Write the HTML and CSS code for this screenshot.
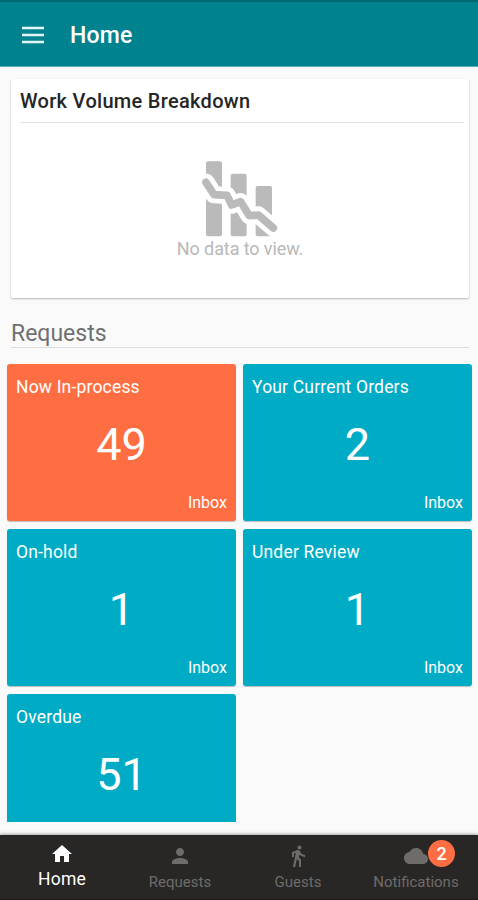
FILE: index.html
```html
<!DOCTYPE html>
<html lang="en">
  <head>
    <meta charset="UTF-8" />
    <meta name="viewport" content="width=device-width, initial-scale=1.0" />
    <title>Home</title>
    <link rel="stylesheet" href="styles.css">
  </head>
  <body>
    <header class="topbar">
      <svg class="menu-icon" viewBox="0 0 24 18" aria-label="Menu">
        <path d="M1 2h22M1 9h22M1 16h22" />
      </svg>
      <h1>Home</h1>
    </header>

    <main class="content">
      <section class="card">
        <h2>Work Volume Breakdown</h2>
        <div class="empty">
          <svg class="chart-icon" viewBox="0 0 240 240">
            <rect x="18" y="7" width="48" height="225" rx="6" />
            <rect x="92" y="44" width="48" height="188" rx="6" />
            <rect x="167" y="81" width="49" height="151" rx="6" />
            <path class="gap" d="M18 70L42 107L81 109L95 138L122 128L148 170L175 168L222 208" />
            <path class="trend" d="M18 70L42 107L81 109L95 138L122 128L148 170L175 168L220 207" />
          </svg>
          <p>No data to view.</p>
        </div>
      </section>

      <h2 class="section-title">Requests</h2>

      <div class="tiles">
        <div class="tile active">
          <span class="name">Now In-process</span>
          <span class="count">49</span>
          <span class="box">Inbox</span>
        </div>
        <div class="tile">
          <span class="name">Your Current Orders</span>
          <span class="count">2</span>
          <span class="box">Inbox</span>
        </div>
        <div class="tile">
          <span class="name">On-hold</span>
          <span class="count">1</span>
          <span class="box">Inbox</span>
        </div>
        <div class="tile">
          <span class="name">Under Review</span>
          <span class="count">1</span>
          <span class="box">Inbox</span>
        </div>
        <div class="tile">
          <span class="name">Overdue</span>
          <span class="count">51</span>
        </div>
      </div>
    </main>

    <nav class="tabs">
      <a class="tab selected">
        <svg viewBox="0 0 24 24"><path d="M10 20v-6h4v6h5v-8h3L12 3 2 12h3v8z" /></svg>
        <span>Home</span>
      </a>
      <a class="tab">
        <svg viewBox="0 0 24 24"><path d="M12 12c2.210 0 4-1.790 4-4s-1.790-4-4-4-4 1.790-4 4 1.790 4 4 4zm0 2c-2.670 0-8 1.340-8 4v2h16v-2c0-2.660-5.330-4-8-4z" /></svg>
        <span>Requests</span>
      </a>
      <a class="tab">
        <svg viewBox="0 0 24 24"><path d="M13.500 5.500c1.100 0 2-.9 2-2s-.9-2-2-2-2 .9-2 2 .9 2 2 2zM9.800 8.900L7 23h2.100l1.800-8 2.100 2v6h2v-7.500l-2.100-2 .6-3C14.800 12 16.800 13 19 13v-2c-1.900 0-3.500-1-4.300-2.400l-1-1.600c-.4-.6-1-1-1.700-1-.3 0-.5.1-.8.1L6 8.300V13h2V9.600l1.800-.7" /></svg>
        <span>Guests</span>
      </a>
      <a class="tab">
        <svg viewBox="0 0 24 24"><path d="M19.350 10.040C18.670 6.590 15.640 4 12 4 9.110 4 6.600 5.640 5.350 8.040 2.340 8.360 0 10.910 0 14c0 3.310 2.690 6 6 6h13c2.760 0 5-2.240 5-5 0-2.640-2.050-4.780-4.650-4.960z" /></svg>
        <span>Notifications</span>
        <b class="badge">2</b>
      </a>
    </nav>
  </body>
</html>
```

FILE: styles.css
```css
* {
  box-sizing: border-box;
}
body {
  margin: 0;
  height: 900px;
  display: flex;
  flex-direction: column;
  overflow: hidden;
  background-color: #fafafa;
  font-family: Roboto, sans-serif;
}
h1,
h2,
p {
  margin: 0;
}
.topbar {
  height: 67px;
  flex: none;
  display: flex;
  align-items: center;
  padding: 3px 21px 0;
  background-color: #00838f;
  border-top: 2px solid #006a73;
  border-bottom: 1px solid #5aabb2;
  color: #fff;
}
.menu-icon {
  width: 24px;
  height: 18px;
  margin: 0 25px 2px 0;
  fill: none;
  stroke: #e4f5f6;
  stroke-width: 2.4;
}
.topbar h1 {
  font-size: 23px;
  font-weight: 500;
  line-height: 28px;
  letter-spacing: 0.2px;
}
.content {
  height: 755px;
  flex: none;
  overflow: hidden;
  padding: 12px 6px 0 7px;
}
.card {
  height: 219px;
  margin: 0 3px 0 4px;
  padding: 0 5px 0 9px;
  background-color: #fff;
  border-radius: 2px;
  box-shadow: 0 1px 2px rgba(0, 0, 0, 0.28);
}
.card h2 {
  height: 44px;
  border-bottom: 1px solid #e2e2e2;
  font-size: 20px;
  font-weight: 500;
  line-height: 44px;
  letter-spacing: 0.3px;
  color: #262626;
}
.empty {
  display: flex;
  flex-direction: column;
  align-items: center;
  padding: 36px 4px 0 0;
  color: #b8b8b8;
}
.empty p {
  font-size: 18px;
  line-height: 20px;
  letter-spacing: -0.1px;
}
.chart-icon {
  width: 80px;
  height: 80px;
  fill: #bababa;
}
.chart-icon path {
  fill: none;
  stroke-linejoin: round;
  stroke-linecap: round;
}
.gap {
  stroke: #fff;
  stroke-width: 52;
}
.trend {
  stroke: #bababa;
  stroke-width: 23;
}
.section-title {
  height: 31px;
  margin: 19px 3px 16px 4px;
  border-bottom: 1px solid #dedede;
  font-size: 23px;
  font-weight: 400;
  line-height: 33px;
  color: #707070;
}
.tiles {
  display: grid;
  grid-template-columns: 1fr 1fr;
  grid-auto-rows: 157px;
  gap: 8px 7px;
}
.tile {
  display: flex;
  flex-direction: column;
  padding: 9px;
  border-radius: 3px;
  background-color: #00acc5;
  box-shadow: 0 1px 1px rgba(0, 0, 0, 0.25);
  color: #fff;
}
.tile.active {
  background-color: #ff6e42;
}
.name {
  font-size: 17.5px;
  line-height: 28px;
  letter-spacing: 0.18px;
}
.count {
  font-size: 45px;
  line-height: 54px;
  margin-top: 17px;
  text-align: center;
}
.box {
  margin-top: 21px;
  font-size: 16px;
  line-height: 20px;
  text-align: right;
}
.tabs {
  height: 65px;
  flex: none;
  margin-top: auto;
  display: flex;
  padding: 0 3px;
  background-color: #292725;
  border-bottom: 1px solid #211512;
  box-shadow: 0 -1px 3px rgba(0, 0, 0, 0.35);
}
.tab {
  position: relative;
  flex: 1;
  display: flex;
  flex-direction: column;
  align-items: center;
  padding-top: 9px;
  color: #6d6c6b;
  font-size: 15px;
  line-height: 20px;
}
.tab svg {
  width: 24px;
  height: 24px;
  margin-bottom: 4px;
  fill: currentColor;
}
.tab.selected {
  padding-top: 7px;
  color: #fff;
  font-size: 17.5px;
  letter-spacing: 0.2px;
}
.tab.selected svg {
  margin-bottom: 3px;
}
/* sits over the cloud icon */
.badge {
  position: absolute;
  top: 5px;
  left: 71px;
  width: 27px;
  height: 27px;
  border-radius: 50%;
  background-color: #ff6e42;
  color: #fff;
  font-size: 18px;
  font-weight: 500;
  line-height: 27px;
  text-align: center;
}
```
